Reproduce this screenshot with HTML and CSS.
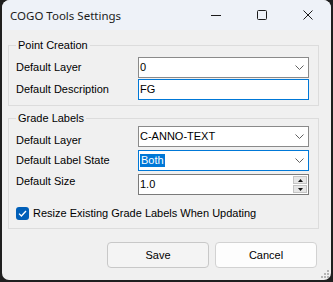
FILE: index.html
```html
<!DOCTYPE html>
<html lang="en">
<head>
    <meta charset="UTF-8">
    <title>COGO Tools Settings</title>
    <link rel="stylesheet" href="styles.css">
</head>
<body>

    <div class="window">
      <div class="titlebar">
        <span class="title">COGO Tools Settings</span>
        <div class="caption-buttons">
          <span class="cap-btn">
            <svg width="10" height="10" viewBox="0 0 10 10"><path d="M0 5.5 H10" stroke="#1b1b1b" stroke-width="1"/></svg>
          </span>
          <span class="cap-btn">
            <svg width="10" height="10" viewBox="0 0 10 10"><rect x="0.5" y="0.5" width="9" height="9" rx="1" fill="none" stroke="#1b1b1b" stroke-width="1"/></svg>
          </span>
          <span class="cap-btn">
            <svg width="10" height="10" viewBox="0 0 10 10"><path d="M0.5 0.5 L9.5 9.5 M9.5 0.5 L0.5 9.5" stroke="#1b1b1b" stroke-width="1"/></svg>
          </span>
        </div>
      </div>

      <div class="content">
        <fieldset class="group group-point">
          <legend>Point Creation</legend>
          <div class="rows">
            <div class="row">
              <span class="lbl">Default Layer</span>
              <div class="ctrl combo">
                <span class="value">0</span>
                <svg class="chevron" width="9" height="5" viewBox="0 0 9 5"><path d="M0.5 0.5 L4.5 4.5 L8.5 0.5" fill="none" stroke="#606060" stroke-width="1"/></svg>
              </div>
            </div>
            <div class="row">
              <span class="lbl">Default Description</span>
              <div class="ctrl textbox hot">
                <span class="value">FG</span>
              </div>
            </div>
          </div>
        </fieldset>

        <fieldset class="group group-grade">
          <legend>Grade Labels</legend>
          <div class="rows">
            <div class="row">
              <span class="lbl lbl-down">Default Layer</span>
              <div class="ctrl combo">
                <span class="value">C-ANNO-TEXT</span>
                <svg class="chevron" width="9" height="5" viewBox="0 0 9 5"><path d="M0.5 0.5 L4.5 4.5 L8.5 0.5" fill="none" stroke="#606060" stroke-width="1"/></svg>
              </div>
            </div>
            <div class="row">
              <span class="lbl">Default Label State</span>
              <div class="ctrl combo focused">
                <span class="value selected">Both</span>
                <svg class="chevron" width="9" height="5" viewBox="0 0 9 5"><path d="M0.5 0.5 L4.5 4.5 L8.5 0.5" fill="none" stroke="#606060" stroke-width="1"/></svg>
              </div>
            </div>
            <div class="row">
              <span class="lbl lbl-up">Default Size</span>
              <div class="ctrl numeric">
                <span class="value">1.0</span>
                <div class="spin">
                  <span class="spin-btn">
                    <svg width="5" height="3" viewBox="0 0 5 3"><path d="M2.5 0 L5 3 L0 3 Z" fill="#111"/></svg>
                  </span>
                  <span class="spin-btn">
                    <svg width="5" height="3" viewBox="0 0 5 3"><path d="M0 0 L5 0 L2.5 3 Z" fill="#111"/></svg>
                  </span>
                </div>
              </div>
            </div>
          </div>
          <div class="check-row">
            <span class="checkbox">
              <svg width="9" height="7" viewBox="0 0 9 7"><path d="M1 3.6 L3.4 6 L8 1" fill="none" stroke="#fff" stroke-width="1.3"/></svg>
            </span>
            <span>Resize Existing Grade Labels When Updating</span>
          </div>
        </fieldset>

        <div class="buttons">
          <span class="btn btn-default">Save</span>
          <span class="btn">Cancel</span>
        </div>
      </div>

      <svg class="grip" width="8" height="8" viewBox="0 0 8 8">
        <rect x="6" y="0" width="2" height="2" fill="#b4b4b4"/>
        <rect x="3" y="3" width="2" height="2" fill="#b4b4b4"/>
        <rect x="6" y="3" width="2" height="2" fill="#b4b4b4"/>
        <rect x="0" y="6" width="2" height="2" fill="#b4b4b4"/>
        <rect x="3" y="6" width="2" height="2" fill="#b4b4b4"/>
        <rect x="6" y="6" width="2" height="2" fill="#b4b4b4"/>
      </svg>
    </div>

</body>
</html>
```

FILE: styles.css
```css
body {
    margin: 0;
    background-color: #1f1f1f;
    font-family: "Liberation Sans", Arial, sans-serif;
    font-size: 11px;
    color: #000;
}

.window {
    position: relative;
    width: 329px;
    height: 280px;
    margin: 0 2px 2px 2px;
    background-color: #f0f0f0;
    border-radius: 8px 8px 7px 7px;
    overflow: hidden;
}

/* title bar */
.titlebar {
    height: 30px;
    display: flex;
    align-items: center;
    justify-content: space-between;
    background-color: #eef2f8;
}

.title {
    font-family: "Noto Sans", sans-serif;
    font-size: 11.5px;
    padding-left: 8px;
    color: #1b1b1b;
}

.caption-buttons {
    display: flex;
    height: 30px;
}

.cap-btn {
    width: 46px;
    display: flex;
    align-items: center;
    justify-content: center;
}

/* dialog body */
.content {
    padding: 9px 12px 0 6px;
}

.group {
    margin: 0;
    padding: 5px 9px 5px 7px;
    border: 1px solid #dcdcdc;
}

.group legend {
    padding: 0 2px;
    line-height: 13px;
}

.group-grade {
    margin-top: 6px;
    padding-top: 0;
    padding-bottom: 8px;
}

.rows {
    display: flex;
    flex-direction: column;
    gap: 1px;
}

.group-grade .rows {
    gap: 3px;
}

.row {
    display: flex;
    align-items: center;
}

.lbl {
    width: 122px;
    line-height: 13px;
}

.lbl-down {
    margin-top: 9px;
}

.lbl-up {
    margin-bottom: 6px;
}

/* controls */
.ctrl {
    box-sizing: border-box;
    width: 171px;
    height: 21px;
    display: flex;
    align-items: center;
    background-color: #fff;
    border: 1px solid #7a7a7a;
    padding-left: 1px;
}

.combo {
    border-color: #8a8a8a;
    padding-right: 4px;
}

.combo.focused,
.textbox.hot {
    border-color: #0078d7;
}

.value {
    flex: 1;
    line-height: 13px;
}

.value.selected {
    flex: none;
    background-color: #0078d7;
    color: #fff;
    padding: 0 1px;
}

.combo .value.selected {
    margin-right: auto;
}

.numeric {
    padding-right: 1px;
}

.spin {
    width: 14px;
    height: 17px;
    display: flex;
    flex-direction: column;
    gap: 1px;
}

.spin-btn {
    flex: 1;
    display: flex;
    align-items: center;
    justify-content: center;
    background-color: #e6e6e6;
    border: 1px solid #c4c4c4;
}

/* checkbox */
.check-row {
    display: flex;
    align-items: center;
    gap: 4px;
    margin-top: 12px;
    line-height: 13px;
}

.checkbox {
    width: 13px;
    height: 13px;
    border-radius: 3px;
    background-color: #005fb8;
    display: flex;
    align-items: center;
    justify-content: center;
}

/* buttons */
.buttons {
    display: flex;
    justify-content: flex-end;
    gap: 6px;
    margin-top: 13px;
    margin-right: 2px;
}

.btn {
    box-sizing: border-box;
    width: 102px;
    height: 26px;
    display: flex;
    align-items: center;
    justify-content: center;
    background-color: #fdfdfd;
    border: 1px solid #d2d2d2;
    border-radius: 4px;
}

.btn-default {
    background-color: #f4f4f4;
    border-color: #c8c8c8;
}

.grip {
    position: absolute;
    right: 2px;
    bottom: 2px;
}
```
